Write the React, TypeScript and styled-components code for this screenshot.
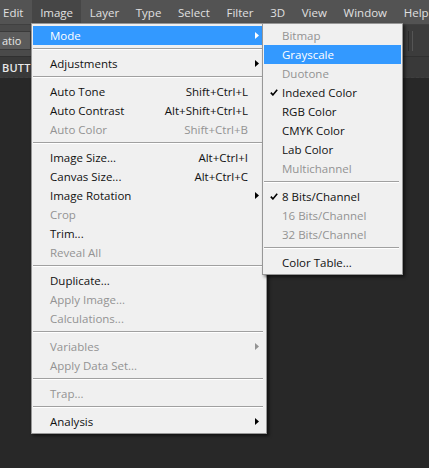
import React from 'react';
import styled, { createGlobalStyle } from 'styled-components';

const GlobalStyle = createGlobalStyle`
  html, body {
    margin: 0;
    padding: 0;
    background: #282828;
  }
  body {
    width: 429px;
    height: 468px;
    overflow: hidden;
    font-family: "Open Sans", "Noto Sans", sans-serif;
  }
`;

const Screen = styled.div`
  position: relative;
  width: 429px;
  height: 468px;
  display: flex;
  flex-direction: column;
  background: #282828;
  overflow: hidden;
`;

const MenuBar = styled.div`
  height: 24px;
  display: flex;
  align-items: stretch;
  background: #535353;
  border-bottom: 1px solid #404040;
`;

const MenuTitle = styled.div<{ $open?: boolean; $first?: boolean }>`
  display: flex;
  align-items: center;
  padding: 0 8.35px;
  padding-left: ${p => (p.$first ? '3px' : '8.35px')};
  color: #e0e0e0;
  font-size: 11.5px;
  white-space: nowrap;
  background: ${p => (p.$open ? '#464646' : 'transparent')};
`;

const OptionsBar = styled.div`
  height: 31px;
  display: flex;
  align-items: center;
  justify-content: space-between;
  background: #4a4a4a;
  border-bottom: 1px solid #303030;
`;

const OptionButton = styled.div`
  height: 17px;
  display: flex;
  align-items: center;
  padding: 0 9px 0 2px;
  background: #5b5b5b;
  border: 1px solid #3a3a3a;
  border-left: none;
  color: #e6e6e6;
  font-size: 11px;
`;

const RightTools = styled.div`
  height: 100%;
  display: flex;
  align-items: center;
  gap: 10px;
  padding-right: 6px;
  background: #3c3c3c;
  color: #dcdcdc;
  font-size: 11px;
`;

const Grip = styled.div`
  width: 3px;
  height: 20px;
  border-left: 1px solid #2c2c2c;
  border-right: 1px solid #555;
`;

const PanelStrip = styled.div`
  height: 20px;
  display: flex;
  align-items: center;
  padding-left: 2px;
  background: #393939;
  border-bottom: 1px dashed #3e3e3e;
  color: #e8e8e8;
  font-size: 11px;
  font-weight: 600;
  letter-spacing: 0.2px;
`;

const Workspace = styled.div`
  flex: 1;
  background: #282828;
`;

const MenuPanel = styled.div<{ $left: number; $width: number }>`
  position: absolute;
  top: 23px;
  left: ${p => p.$left}px;
  width: ${p => p.$width}px;
  box-sizing: border-box;
  padding: 2px 1px;
  background: #f0f0f0;
  border: 1px solid #979797;
  box-shadow: 2px 2px 3px rgba(0, 0, 0, 0.55);
  font-size: 11.5px;
`;

const MainRow = styled.div<{ $active?: boolean; $disabled?: boolean }>`
  height: 19px;
  display: grid;
  grid-template-columns: 1fr auto 17px;
  align-items: center;
  padding-left: 17px;
  white-space: nowrap;
  background: ${p => (p.$active ? '#3399ff' : 'transparent')};
  color: ${p => (p.$active ? '#ffffff' : p.$disabled ? '#939393' : '#111111')};
`;

const SubRow = styled.div<{ $active?: boolean; $disabled?: boolean }>`
  height: 19px;
  display: grid;
  grid-template-columns: 18px 1fr;
  align-items: center;
  white-space: nowrap;
  background: ${p => (p.$active ? '#3399ff' : 'transparent')};
  color: ${p => (p.$active ? '#ffffff' : p.$disabled ? '#939393' : '#111111')};
`;

const Shortcut = styled.span`
  text-align: right;
`;

const ArrowCell = styled.span`
  display: flex;
  justify-content: center;
  align-items: center;
`;

const CheckCell = styled.span`
  display: flex;
  justify-content: center;
  align-items: center;
  padding-left: 1px;
`;

const Separator = styled.div`
  margin: 3px 2px 4px 0;
  border-top: 1px solid #a0a0a0;
  border-bottom: 1px solid #ffffff;
`;

const Arrow = ({ color }: { color: string }) => (
  <svg width="4" height="7" viewBox="0 0 4 7">
    <path d="M0 0 L4 3.5 L0 7 Z" fill={color} />
  </svg>
);

const Check = () => (
  <svg width="8" height="7" viewBox="0 0 8 7">
    <path d="M0.8 3.6 L2.9 5.9 L7.2 0.8" fill="none" stroke="#000" strokeWidth="1.6" />
  </svg>
);

type Entry =
  | 'sep'
  | { label: string; shortcut?: string; sub?: boolean; active?: boolean; disabled?: boolean; checked?: boolean };

const titles = ['Edit', 'Image', 'Layer', 'Type', 'Select', 'Filter', '3D', 'View', 'Window', 'Help'];

const imageMenu: Entry[] = [
  { label: 'Mode', sub: true, active: true },
  'sep',
  { label: 'Adjustments', sub: true },
  'sep',
  { label: 'Auto Tone', shortcut: 'Shift+Ctrl+L' },
  { label: 'Auto Contrast', shortcut: 'Alt+Shift+Ctrl+L' },
  { label: 'Auto Color', shortcut: 'Shift+Ctrl+B', disabled: true },
  'sep',
  { label: 'Image Size...', shortcut: 'Alt+Ctrl+I' },
  { label: 'Canvas Size...', shortcut: 'Alt+Ctrl+C' },
  { label: 'Image Rotation', sub: true },
  { label: 'Crop', disabled: true },
  { label: 'Trim...' },
  { label: 'Reveal All', disabled: true },
  'sep',
  { label: 'Duplicate...' },
  { label: 'Apply Image...', disabled: true },
  { label: 'Calculations...', disabled: true },
  'sep',
  { label: 'Variables', sub: true, disabled: true },
  { label: 'Apply Data Set...', disabled: true },
  'sep',
  { label: 'Trap...', disabled: true },
  'sep',
  { label: 'Analysis', sub: true },
];

const modeMenu: Entry[] = [
  { label: 'Bitmap', disabled: true },
  { label: 'Grayscale', active: true },
  { label: 'Duotone', disabled: true },
  { label: 'Indexed Color', checked: true },
  { label: 'RGB Color' },
  { label: 'CMYK Color' },
  { label: 'Lab Color' },
  { label: 'Multichannel', disabled: true },
  'sep',
  { label: '8 Bits/Channel', checked: true },
  { label: '16 Bits/Channel', disabled: true },
  { label: '32 Bits/Channel', disabled: true },
  'sep',
  { label: 'Color Table...' },
];

export default function App() {
  return (
    <Screen>
      <GlobalStyle />
      <MenuBar>
        {titles.map((t, i) => (
          <MenuTitle key={t} $first={i === 0} $open={t === 'Image'}>
            {t}
          </MenuTitle>
        ))}
      </MenuBar>
      <OptionsBar>
        <OptionButton>atio</OptionButton>
        <RightTools>
          <span>Selection</span>
          <Grip />
          <span />
        </RightTools>
      </OptionsBar>
      <PanelStrip>BUTTONS</PanelStrip>
      <Workspace />

      <MenuPanel $left={31} $width={236}>
        {imageMenu.map((e, i) =>
          e === 'sep' ? (
            <Separator key={i} />
          ) : (
            <MainRow key={i} $active={e.active} $disabled={e.disabled}>
              <span>{e.label}</span>
              <Shortcut>{e.shortcut}</Shortcut>
              <ArrowCell>
                {e.sub && <Arrow color={e.active ? '#ffffff' : e.disabled ? '#939393' : '#000000'} />}
              </ArrowCell>
            </MainRow>
          )
        )}
      </MenuPanel>

      <MenuPanel $left={262} $width={141}>
        {modeMenu.map((e, i) =>
          e === 'sep' ? (
            <Separator key={i} />
          ) : (
            <SubRow key={i} $active={e.active} $disabled={e.disabled}>
              <CheckCell>{e.checked && <Check />}</CheckCell>
              <span>{e.label}</span>
            </SubRow>
          )
        )}
      </MenuPanel>
    </Screen>
  );
}
